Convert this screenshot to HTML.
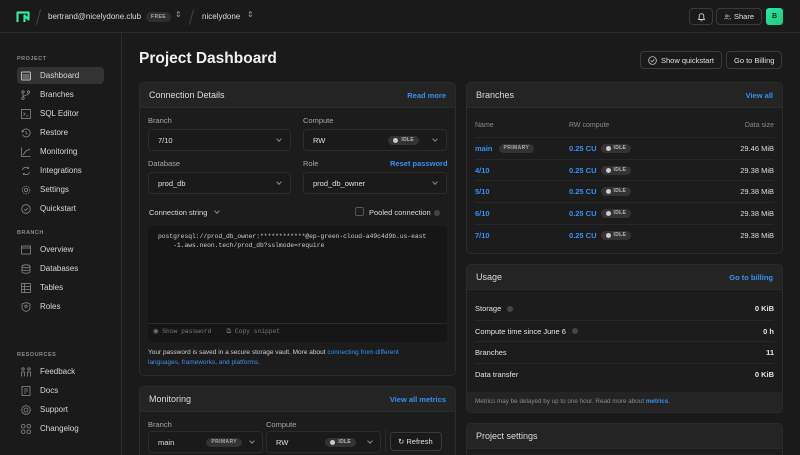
<!DOCTYPE html>
<html style="width:800px;height:455px;overflow:hidden"><head><meta charset="utf-8"><style>
*{box-sizing:border-box;margin:0;padding:0}
body{width:800px;height:455px;overflow:hidden;background:#1a1a1a;font-family:"Liberation Sans",sans-serif;color:#e4e4e4;position:relative;font-size:8px}
.a{position:absolute;white-space:nowrap}
.top{left:0;top:0;width:800px;height:33px;border-bottom:1px solid #2c2c2c;background:#1a1a1a}
.side{left:0;top:33px;width:122px;height:422px;border-right:1px solid #2c2c2c;background:#1a1a1a}
.sec{font-size:5.5px;color:#8c8c8c;letter-spacing:.5px;font-weight:bold}
.it{left:17px;width:87px;height:17px;border-radius:4px;display:flex;align-items:center;padding-left:4px;font-size:8px;color:#d8d8d8}
.it svg{width:10px;height:10px;margin-right:9px;flex:none}
.card{background:#1c1c1c;border:1px solid #2b2b2b;border-radius:5px;overflow:hidden}
.ch{height:25px;background:#242424;border-bottom:1px solid #2b2b2b;display:flex;align-items:center;justify-content:space-between;padding:0 9px;font-size:9px;color:#dcdcdc}
.ch b{color:#3b8ff0;font-size:7.5px}
.lbl{font-size:7.5px;color:#a8a8a8}
.sel{height:22px;border:1px solid #2c2c2c;border-radius:4px;background:#1a1a1a;display:flex;align-items:center;padding:0 9px;font-size:7.5px;color:#e0e0e0}
.chev{margin-left:auto;width:4px;height:4px;border-right:1px solid #888;border-bottom:1px solid #888;transform:rotate(45deg);margin-top:-2px}
.idle{display:inline-flex;align-items:center;background:#333;border-radius:6px;height:9px;line-height:9px;padding:0 5px;font-size:5px;color:#bbb;font-weight:bold;letter-spacing:.3px;vertical-align:middle}
.idle:before{content:"";width:5px;height:5px;border-radius:50%;background:#ccc;margin-right:3px}
.prim{display:inline-flex;align-items:center;background:#333;border-radius:6px;height:9px;line-height:9px;padding:0 5px;font-size:5px;color:#aaa;font-weight:bold;letter-spacing:.4px;vertical-align:middle}
.blue{color:#3b8ff0}
.row{position:absolute;left:8px;right:8px;height:21.6px;border-top:1px solid #272727;display:flex;align-items:center;font-size:7.5px}
.btn{border:1px solid #3a3a3a;border-radius:4px;height:18px;display:flex;align-items:center;padding:0 7px;font-size:7.5px;color:#e0e0e0;background:#1a1a1a}
.q{display:inline-block;width:6px;height:6px;border-radius:50%;background:#444;margin-left:6px;vertical-align:middle}
.cu{position:absolute;left:94px;font-weight:bold;display:flex;align-items:center}
</style></head><body>
<div class="a top"></div>
<svg class="a" style="left:16px;top:10px" width="14" height="14" viewBox="0 0 14 14"><path d="M1.5 12V2.5h11V9.5l-4-4V12" fill="none" stroke="#37e6a0" stroke-width="2.2" stroke-linejoin="round"/></svg>
<div class="a" style="left:38px;top:9px;width:1px;height:16px;background:#444;transform:rotate(15deg)"></div>
<div class="a" style="left:48px;top:12px;font-size:8px;color:#dcdcdc">bertrand@nicelydone.club</div>
<div class="a prim" style="left:146px;top:12px;height:10px;background:#2e2e2e">FREE</div>
<div class="a" style="left:175px;top:10px;font-size:8px;color:#999">⇕</div>
<div class="a" style="left:191px;top:9px;width:1px;height:16px;background:#444;transform:rotate(15deg)"></div>
<div class="a" style="left:202px;top:12px;font-size:8px;color:#dcdcdc">nicelydone</div>
<div class="a" style="left:247px;top:10px;font-size:8px;color:#999">⇕</div>
<div class="a btn" style="left:689px;top:8px;width:24px;height:17px;justify-content:center;padding:0"><svg width="9" height="10" viewBox="0 0 9 10"><path d="M1.5 7.5h6L6.8 6.3V4a2.3 2.3 0 0 0-4.6 0v2.3zM3.6 8.8h1.8" fill="none" stroke="#ccc" stroke-width=".9"/></svg></div>
<div class="a btn" style="left:716px;top:8px;width:46px;height:17px"><svg width="10" height="8" viewBox="0 0 10 8" style="margin-right:3px"><circle cx="3.5" cy="2.5" r="1.6" fill="none" stroke="#ccc" stroke-width=".8"/><path d="M.8 7.5c0-2 5.4-2 5.4 0M6.5 1.2a1.5 1.5 0 0 1 0 2.8M8 5.2c1 .4 1.3 1.2 1.3 2.3" fill="none" stroke="#ccc" stroke-width=".8"/></svg>Share</div>
<div class="a" style="left:766px;top:8px;width:17px;height:17px;border-radius:3px;background:linear-gradient(135deg,#2ee6a8,#20c878);color:#0a2a1a;font-size:7px;font-weight:bold;display:flex;align-items:center;justify-content:center">B</div>

<div class="a side"></div>
<div class="a sec" style="left:17px;top:56px">PROJECT</div>
<div class="a it" style="top:67px;background:#333">
<svg viewBox="0 0 10 10"><rect x=".5" y="1" width="9" height="8" rx="1" fill="none" stroke="#bbb"/><rect x="1.5" y="3" width="7" height="5" fill="#666"/></svg>Dashboard</div>
<div class="a it" style="top:86px"><svg viewBox="0 0 10 10" fill="none" stroke="#888" stroke-width=".8"><circle cx="2" cy="2" r="1.2"/><circle cx="2" cy="8.3" r="1.2"/><circle cx="7.5" cy="2" r="1.2"/><path d="M2 3.2v3.9M7.5 3.2c0 2.5-5.5 1.5-5.5 4"/></svg>Branches</div>
<div class="a it" style="top:105px"><svg viewBox="0 0 10 10" fill="none" stroke="#888" stroke-width=".8"><rect x=".5" y=".5" width="9" height="9"/><path d="M2.5 3.5l1.5 1.5-1.5 1.5M5 7h2.5"/></svg>SQL Editor</div>
<div class="a it" style="top:124px"><svg viewBox="0 0 10 10" fill="none" stroke="#888" stroke-width=".8"><path d="M1.5 6.5A4 4 0 1 0 1.3 4M.5 2.5l.8 1.6 1.6-.7M5 3v2.3l1.5 1"/></svg>Restore</div>
<div class="a it" style="top:143px"><svg viewBox="0 0 10 10" fill="none" stroke="#888" stroke-width=".8"><path d="M.5.5v9h9M2 8l3-4 4-2"/></svg>Monitoring</div>
<div class="a it" style="top:162px"><svg viewBox="0 0 10 10" fill="none" stroke="#888" stroke-width=".8"><path d="M1.5 4a3.5 3.5 0 0 1 6-1.5M8.5 6a3.5 3.5 0 0 1-6 1.5M7.5 1v1.5H6M2.5 9V7.5H4"/></svg>Integrations</div>
<div class="a it" style="top:181px"><svg viewBox="0 0 10 10" fill="none" stroke="#888" stroke-width=".8"><circle cx="5" cy="5" r="1.6"/><circle cx="5" cy="5" r="3.8" stroke-dasharray="1.5 1"/></svg>Settings</div>
<div class="a it" style="top:200px"><svg viewBox="0 0 10 10" fill="none" stroke="#888" stroke-width=".8"><circle cx="5" cy="5" r="4.3"/><path d="M3 5l1.5 1.5L7 3.8"/></svg>Quickstart</div>
<div class="a sec" style="left:17px;top:230px">BRANCH</div>
<div class="a it" style="top:241px"><svg viewBox="0 0 10 10" fill="none" stroke="#888" stroke-width=".8"><rect x=".5" y="1" width="9" height="8"/><path d="M.5 3h9"/></svg>Overview</div>
<div class="a it" style="top:260px"><svg viewBox="0 0 10 10" fill="none" stroke="#888" stroke-width=".8"><ellipse cx="5" cy="2.3" rx="4" ry="1.5"/><path d="M1 2.3v5.4c0 2 8 2 8 0V2.3M1 5c0 2 8 2 8 0"/></svg>Databases</div>
<div class="a it" style="top:279px"><svg viewBox="0 0 10 10" fill="none" stroke="#888" stroke-width=".8"><rect x=".5" y=".5" width="9" height="9"/><path d="M.5 3.5h9M.5 6.5h9M3.5.5v9"/></svg>Tables</div>
<div class="a it" style="top:298px"><svg viewBox="0 0 10 10" fill="none" stroke="#888" stroke-width=".8"><path d="M5 .5l4 1.5v3c0 2.5-2 4-4 4.5-2-.5-4-2-4-4.5V2z"/><circle cx="5" cy="4.3" r="1.2"/></svg>Roles</div>
<div class="a sec" style="left:17px;top:352px">RESOURCES</div>
<div class="a it" style="top:363px"><svg viewBox="0 0 10 10" fill="none" stroke="#888" stroke-width=".8"><circle cx="2" cy="2" r="1.2"/><circle cx="8" cy="2" r="1.2"/><path d="M.5 9.5V5h3v4.5M6.5 9.5V5h3v4.5"/></svg>Feedback</div>
<div class="a it" style="top:382px"><svg viewBox="0 0 10 10" fill="none" stroke="#888" stroke-width=".8"><rect x="1" y=".5" width="8" height="9"/><path d="M3 3h4M3 5h4M3 7h2"/></svg>Docs</div>
<div class="a it" style="top:401px"><svg viewBox="0 0 10 10" fill="none" stroke="#888" stroke-width=".8"><circle cx="5" cy="5" r="4.3"/><circle cx="5" cy="5" r="2"/></svg>Support</div>
<div class="a it" style="top:420px"><svg viewBox="0 0 10 10" fill="none" stroke="#888" stroke-width=".8"><rect x=".5" y=".5" width="3.5" height="3.5" rx="1.5"/><rect x="6" y=".5" width="3.5" height="3.5" rx="1.5"/><rect x=".5" y="6" width="3.5" height="3.5" rx="1.5"/><rect x="6" y="6" width="3.5" height="3.5" rx="1.5"/></svg>Changelog</div>

<div class="a" style="left:139px;top:50px;font-size:15.5px;font-weight:bold;color:#f0f0f0">Project Dashboard</div>
<div class="a btn" style="left:640px;top:51px;height:18px"><svg width="9" height="9" viewBox="0 0 10 10" style="margin-right:4px" fill="none" stroke="#ccc" stroke-width=".9"><circle cx="5" cy="5" r="4.3"/><path d="M3 5l1.5 1.5L7 3.8"/></svg>Show quickstart</div>
<div class="a btn" style="left:726px;top:51px;height:18px">Go to Billing</div>

<div class="a card" style="left:139px;top:82px;width:317px;height:294px">
<div class="ch">Connection Details<b>Read more</b></div>
</div>
<div class="a lbl" style="left:148px;top:116px">Branch</div>
<div class="a sel" style="left:148px;top:129px;width:143px">7/10<span class="chev"></span></div>
<div class="a lbl" style="left:303px;top:116px">Compute</div>
<div class="a sel" style="left:303px;top:129px;width:144px">RW<span class="idle" style="margin-left:auto;margin-right:14px">IDLE</span><span class="chev" style="margin-left:0"></span></div>
<div class="a lbl" style="left:148px;top:159px">Database</div>
<div class="a sel" style="left:148px;top:172px;width:143px">prod_db<span class="chev"></span></div>
<div class="a lbl" style="left:303px;top:159px">Role</div>
<div class="a blue" style="left:390px;top:159px;font-size:7.5px;font-weight:bold">Reset password</div>
<div class="a sel" style="left:303px;top:172px;width:144px">prod_db_owner<span class="chev"></span></div>
<div class="a" style="left:149px;top:208px;font-size:7.5px;color:#ddd">Connection string <span style="display:inline-block;width:4px;height:4px;border-right:1px solid #888;border-bottom:1px solid #888;transform:rotate(45deg);margin:0 0 2px 6px"></span></div>
<div class="a" style="left:355px;top:207px;width:9px;height:9px;border:1px solid #555;border-radius:2px"></div>
<div class="a" style="left:369px;top:208px;font-size:7.5px;color:#ddd">Pooled connection<span class="q" style="margin-left:3px"></span></div>
<div class="a" style="left:148px;top:226px;width:299px;height:116px;background:#161616;border-radius:4px"></div>
<div class="a" style="left:158px;top:233px;font-family:'Liberation Mono',monospace;font-size:6.3px;color:#cfcfcf;line-height:8.5px">postgresql://prod_db_owner:************@ep-green-cloud-a49c4d9b.us-east<br>&nbsp;&nbsp;&nbsp;&nbsp;-1.aws.neon.tech/prod_db?sslmode=require</div>
<div class="a" style="left:148px;top:323px;width:299px;height:1px;background:#2a2a2a"></div>
<div class="a" style="left:153px;top:328px;font-family:'Liberation Mono',monospace;font-size:6.3px;color:#777">◉ Show password&nbsp;&nbsp;&nbsp;&nbsp;⧉ Copy snippet</div>
<div class="a" style="left:148px;top:348px;font-size:6.5px;color:#cfcfcf;line-height:9.5px">Your password is saved in a secure storage vault. More about <span class="blue">connecting from different</span><br><span class="blue">languages, frameworks, and platforms.</span></div>

<div class="a card" style="left:139px;top:386px;width:317px;height:75px">
<div class="ch">Monitoring<b>View all metrics</b></div>
</div>
<div class="a lbl" style="left:148px;top:420px">Branch</div>
<div class="a sel" style="left:148px;top:431px;width:115px;padding-right:8px">main<span class="prim" style="margin-left:auto;margin-right:8px">PRIMARY</span><span class="chev" style="margin-left:0"></span></div>
<div class="a lbl" style="left:266px;top:420px">Compute</div>
<div class="a sel" style="left:266px;top:431px;width:115px;padding-right:8px">RW<span class="idle" style="margin-left:auto;margin-right:12px">IDLE</span><span class="chev" style="margin-left:0"></span></div>
<div class="a" style="left:385px;top:430px;width:1px;height:22px;background:#2c2c2c"></div>
<div class="a btn" style="left:390px;top:432px;height:19px;width:52px">↻&nbsp;Refresh</div>

<div class="a card" style="left:466px;top:82px;width:317px;height:172px">
<div class="ch">Branches<b>View all</b></div>
<div class="a" style="left:8px;right:8px;top:39px;display:flex;font-size:7px;color:#8a8a8a"><span style="width:94px">Name</span><span>RW compute</span><span style="margin-left:auto">Data size</span></div>
<div class="row" style="top:54px"><span class="blue" style="font-weight:bold">main</span><span class="prim" style="margin-left:6px">PRIMARY</span><span class="blue cu">0.25 CU <span class="idle" style="margin-left:4px">IDLE</span></span><span style="margin-left:auto;color:#ddd">29.46 MiB</span></div>
<div class="row" style="top:76px"><span class="blue" style="font-weight:bold">4/10</span><span class="blue cu">0.25 CU <span class="idle" style="margin-left:4px">IDLE</span></span><span style="margin-left:auto;color:#ddd">29.38 MiB</span></div>
<div class="row" style="top:97px"><span class="blue" style="font-weight:bold">5/10</span><span class="blue cu">0.25 CU <span class="idle" style="margin-left:4px">IDLE</span></span><span style="margin-left:auto;color:#ddd">29.38 MiB</span></div>
<div class="row" style="top:119px"><span class="blue" style="font-weight:bold">6/10</span><span class="blue cu">0.25 CU <span class="idle" style="margin-left:4px">IDLE</span></span><span style="margin-left:auto;color:#ddd">29.38 MiB</span></div>
<div class="row" style="top:141px"><span class="blue" style="font-weight:bold">7/10</span><span class="blue cu">0.25 CU <span class="idle" style="margin-left:4px">IDLE</span></span><span style="margin-left:auto;color:#ddd">29.38 MiB</span></div>
</div>

<div class="a card" style="left:466px;top:264px;width:317px;height:149px">
<div class="ch">Usage<b>Go to billing</b></div>
<div class="row" style="top:33px;border-top:none">Storage<span class="q"></span><span style="margin-left:auto;font-weight:bold">0 KiB</span></div>
<div class="row" style="top:55px">Compute time since June 6<span class="q"></span><span style="margin-left:auto;font-weight:bold">0 h</span></div>
<div class="row" style="top:76px">Branches<span style="margin-left:auto;font-weight:bold">11</span></div>
<div class="row" style="top:98px">Data transfer<span style="margin-left:auto;font-weight:bold">0 KiB</span></div>
<div class="a" style="left:0;right:0;top:127px;height:22px;background:#242424;padding:6px 8px;font-size:6.3px;color:#8a8a8a">Metrics may be delayed by up to one hour. Read more about <span class="blue" style="font-weight:bold">metrics</span>.</div>
</div>

<div class="a card" style="left:466px;top:423px;width:317px;height:40px">
<div class="ch">Project settings</div>
</div>
</body></html>
